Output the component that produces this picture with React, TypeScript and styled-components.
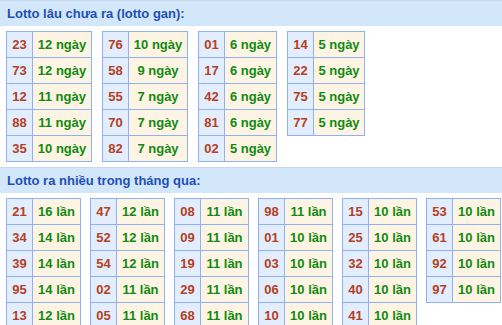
import React from 'react';
import styled, { createGlobalStyle } from 'styled-components';

const GlobalStyle = createGlobalStyle`
  body {
    margin: 0;
    background: #ffffff;
    font-family: "Liberation Sans", Arial, sans-serif;
  }
  * {
    box-sizing: border-box;
  }
`;

const Page = styled.div`
  width: 502px;
  overflow: hidden;
`;

const SectionTitle = styled.div`
  background-color: #d3e7fb;
  border-top: 1px solid #c6d9ec;
  color: #1f4fb5;
  font-size: 13px;
  font-weight: 700;
  height: 26px;
  line-height: 25px;
  padding-left: 7px;
`;

const Tables = styled.div<{ $gap: number }>`
  display: flex;
  align-items: flex-start;
  gap: ${({ $gap }) => $gap}px;
  padding: 5px 6px 5px;
`;

const Table = styled.div<{ $valueWidth: number }>`
  display: grid;
  grid-template-columns: 26px ${({ $valueWidth }) => $valueWidth}px;
  grid-auto-rows: 26px;
  border-top: 1px solid #8fb1f1;
  border-left: 1px solid #8fb1f1;
  font-size: 13px;
  font-weight: 700;
  flex-shrink: 0;
`;

const Cell = styled.div`
  display: flex;
  align-items: center;
  justify-content: center;
  border-right: 1px solid #8fb1f1;
  border-bottom: 1px solid #8fb1f1;
  white-space: nowrap;
`;

const NumCell = styled(Cell)`
  background-color: #e2eefd;
  color: #b5401d;
`;

const ValueCell = styled(Cell)`
  background-color: #fef4e4;
  color: #118a11;
`;

type Item = [string, string];

const gan: Item[][] = [
  [['23', '12'], ['73', '12'], ['12', '11'], ['88', '11'], ['35', '10']],
  [['76', '10'], ['58', '9'], ['55', '7'], ['70', '7'], ['82', '7']],
  [['01', '6'], ['17', '6'], ['42', '6'], ['81', '6'], ['02', '5']],
  [['14', '5'], ['22', '5'], ['75', '5'], ['77', '5']],
];
const ganWidths = [59, 59, 52, 51];

const nhieu: Item[][] = [
  [['21', '16'], ['34', '14'], ['39', '14'], ['95', '14'], ['13', '12']],
  [['47', '12'], ['52', '12'], ['54', '12'], ['02', '11'], ['05', '11']],
  [['08', '11'], ['09', '11'], ['19', '11'], ['29', '11'], ['68', '11']],
  [['98', '11'], ['01', '10'], ['03', '10'], ['06', '10'], ['10', '10']],
  [['15', '10'], ['25', '10'], ['32', '10'], ['40', '10'], ['41', '10']],
  [['53', '10'], ['61', '10'], ['92', '10'], ['97', '10']],
];

const LottoTable = ({ rows, unit, valueWidth }: { rows: Item[]; unit: string; valueWidth: number }) => (
  <Table $valueWidth={valueWidth}>
    {rows.map(([num, count]) => (
      <React.Fragment key={num}>
        <NumCell>{num}</NumCell>
        <ValueCell>
          {count} {unit}
        </ValueCell>
      </React.Fragment>
    ))}
  </Table>
);

const App = () => {
  return (
    <Page>
      <GlobalStyle />
      <SectionTitle>Lotto lâu chưa ra (lotto gan):</SectionTitle>
      <Tables $gap={10}>
        {gan.map((rows, i) => (
          <LottoTable key={i} rows={rows} unit="ngày" valueWidth={ganWidths[i]} />
        ))}
      </Tables>
      <SectionTitle>Lotto ra nhiều trong tháng qua:</SectionTitle>
      <Tables $gap={9}>
        {nhieu.map((rows, i) => (
          <LottoTable key={i} rows={rows} unit="lần" valueWidth={48} />
        ))}
      </Tables>
    </Page>
  );
};

export default App;
